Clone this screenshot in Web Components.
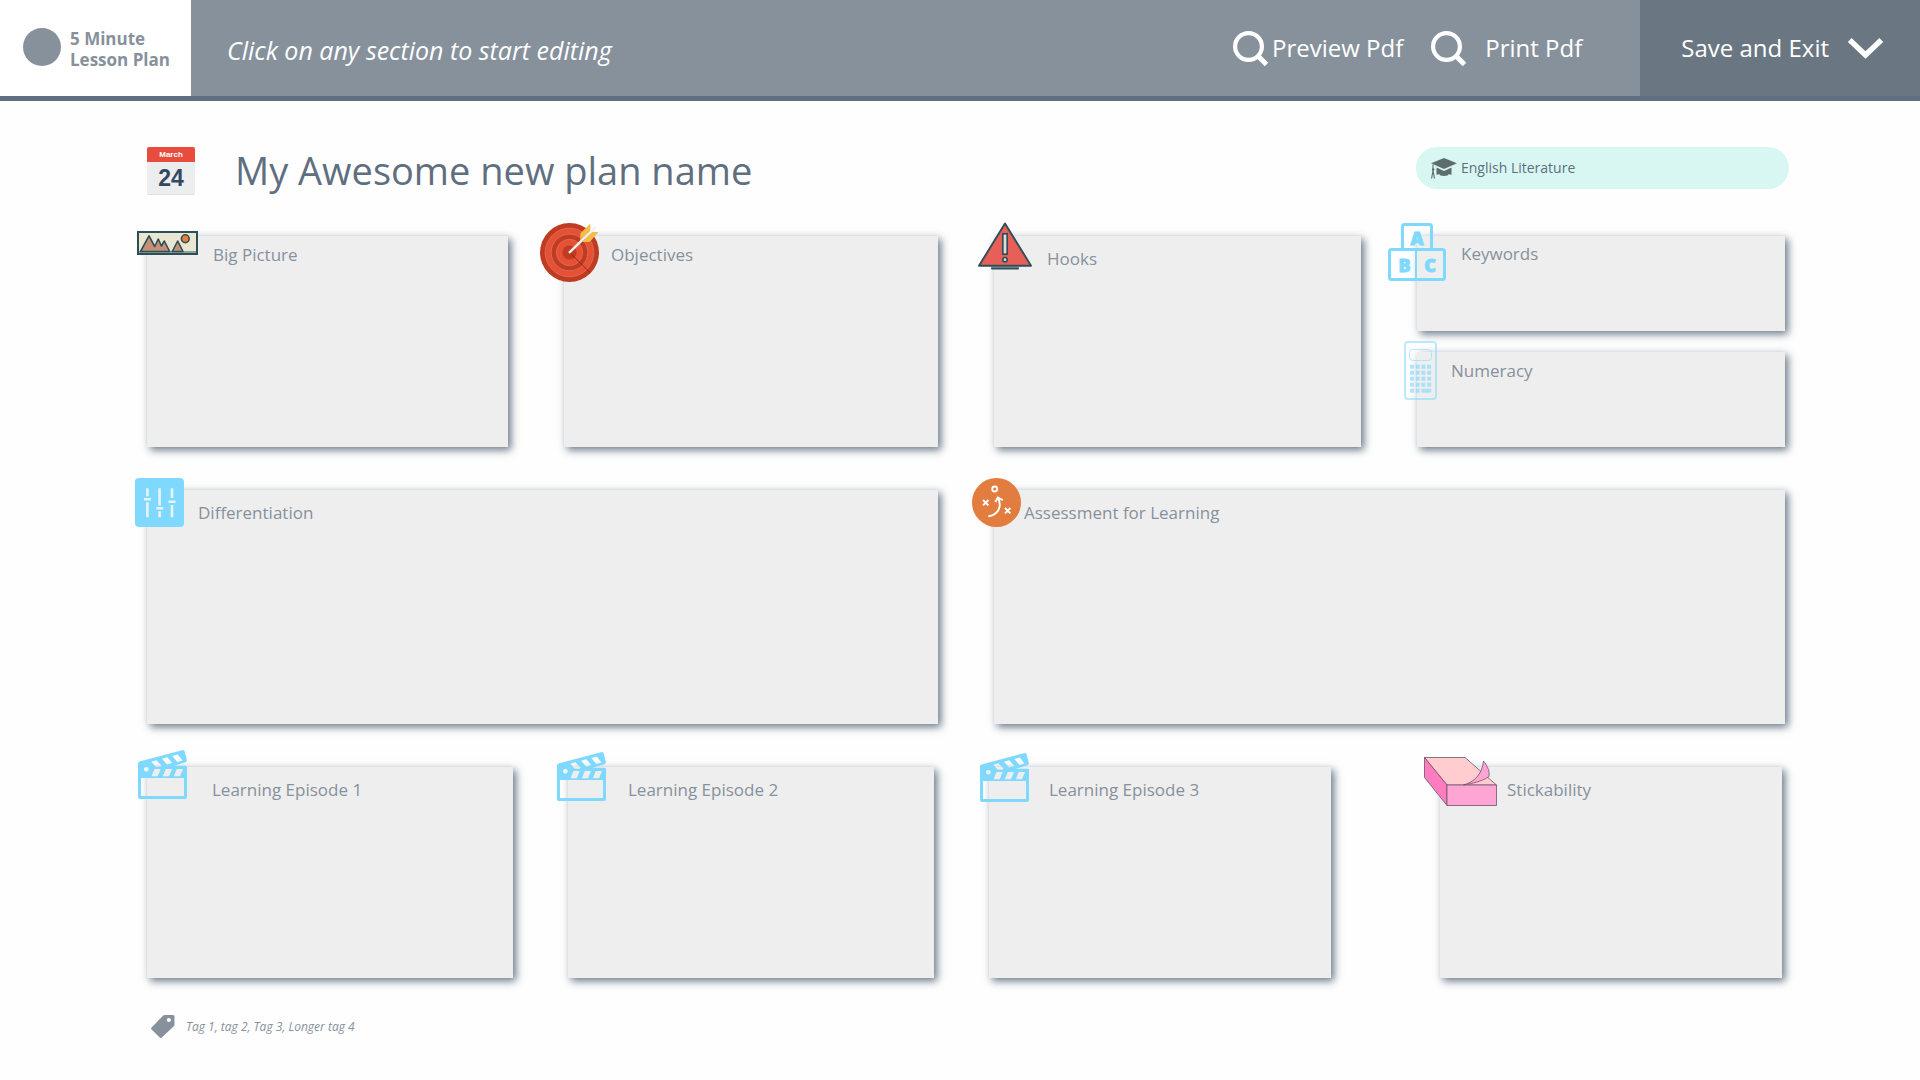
<!DOCTYPE html>
<html lang="en">
<head>
<meta charset="utf-8">
<title>5 Minute Lesson Plan</title>
<style>
  body { margin: 0; background: #fefefe; font-family: "Open Sans", "Noto Sans", sans-serif; color: #5f6f7f; }
</style>
</head>
<body>
<lesson-app></lesson-app>
<script>
const ICONS = {
  search: [35, 35, `<g fill="none" stroke="#fff"><circle cx="15.5" cy="15.5" r="13.4" stroke-width="4.2"/><path d="M25 25l8.5 8.5" stroke-width="5"/></g>`],
  chevron: [35, 21, `<path d="M1.7 2l15.8 15L33.300 2" fill="none" stroke="#fff" stroke-width="5.400"/>`],
  cap: [26, 21, `<g fill="#5d6c6c"><path d="M0 5.300L13 0l13 5.300L13 11z"/><path d="M5.500 9.500L13 13l7.500-3.500V17c-1.500-1-3-1-4 .5L13 18l-3.500-.5c-1-1.500-2.500-1.500-4-.5z"/><path d="M2 6.500v6L.6 20.500M2 12.500L3.500 20.500" fill="none" stroke="#5d6c6c" stroke-width="1.100"/><circle cx="2.200" cy="11.500" r="1.200"/></g>`],
  picture: [61, 24, `<rect x="1" y="1" width="59" height="22" fill="#e9e7d2" stroke="#2f4f58" stroke-width="2"/><path d="M2 21h57" stroke="#8fa098" stroke-width="2"/><g fill="#c69076" stroke="#2f4f58" stroke-width="1.600" stroke-linejoin="round"><path d="M3.500 20.500L12 4.800l5.700 10.700L21.300 8l3.100 7 2.900-5 5.400 10.500z"/><path d="M35.200 20.500L40.700 10l5.300 10.500z"/><circle cx="48.300" cy="7.700" r="3.900" fill="#f07c38"/></g>`],
  target: [59, 59, `<circle cx="29.500" cy="29.500" r="29.500" fill="#bf3c23"/><circle cx="29.500" cy="29.500" r="24.300" fill="#e65035"/><circle cx="29.500" cy="29.500" r="18.300" fill="#bf3c23"/><circle cx="29.500" cy="29.500" r="13.200" fill="#e65035"/><circle cx="29.500" cy="29.500" r="7" fill="#bf3c23"/><g fill="none" stroke="#e0806c" stroke-width=".6"><circle cx="29.500" cy="29.500" r="24.300"/><circle cx="29.500" cy="29.500" r="18.300"/><circle cx="29.500" cy="29.500" r="13.200"/></g><path d="M29.500 29.500l20.500 20" stroke="#8e2a18" stroke-width="1"/><path d="M40.300 10.500l10-10v7.500l-10 9.500z" fill="#f6bd45"/><path d="M58.500 9L49.700 19h-7.200L51.500 9z" fill="#f6bd45"/><path d="M29 29.800L55.300 4.300" stroke="#f0f0f0" stroke-width="2.400"/>`],
  warning: [54, 48, `<path d="M13 45h28" stroke="#8fa0a5" stroke-width="1.500"/><path d="M14 46.500h26" stroke="#2f4f58" stroke-width="2" stroke-linecap="round"/><path d="M27 1.500L53 43.700H1z" fill="#e85f5a" stroke="#2f4f58" stroke-width="1.900" stroke-linejoin="round"/><g fill="#e3d9d9" stroke="#2f4f58" stroke-width="1.700"><rect x="24.800" y="11.800" width="4.400" height="20.400"/><circle cx="27" cy="37.700" r="2.200"/></g>`],
  blocks: [58, 58, `<g fill="none" stroke="#7fd9ff" stroke-width="3"><path d="M14.500 26.500V3.500q0-2 2-2h25q2 0 2 2v23"/><rect x="1.500" y="26.500" width="55" height="30" rx="2"/><path d="M28 27v29" stroke-width="2"/></g><g fill="#7fd9ff" stroke="#7fd9ff" stroke-width=".9" font-family="'Open Sans', sans-serif" font-weight="800" font-size="18" text-anchor="middle"><text x="29" y="21.500">A</text><text x="16.500" y="48.500">B</text><text x="42" y="48.500">C</text></g>`],
  calculator: [33, 59, `<g stroke="#7fd9ff" fill="none" opacity=".52"><rect x="1" y="1" width="31" height="57" rx="3" stroke-width="2"/><rect x="5.500" y="8.500" width="22" height="11" rx="3"/></g><path opacity=".6" stroke="#7fd9ff" stroke-width="4" stroke-dasharray="4 1.700" d="M6 25.700h22M6 31.700h22M6 37.700h22M6 43.700h22M6 49.700h11"/><path opacity=".6" stroke="#7fd9ff" stroke-width="4" d="M17.300 49.700h10"/>`],
  sliders: [49, 49, `<rect width="49" height="49" rx="4" fill="#7fd9ff"/><g stroke="#eaf2f6" stroke-width="2.600"><path d="M12.400 10.300v8M12.400 24.300v15M24.600 10.300v17.200M24.600 33.200v6.100M37 10.300v9.800M37 27v12.300"/><path d="M9 21.300h7M21.200 30.300h7M33.500 23.700h7"/></g>`],
  strategy: [49, 49, `<circle cx="24.500" cy="24.500" r="24.500" fill="#e27d3f"/><g fill="none" stroke="#fff" stroke-width="1.900"><circle cx="22.700" cy="11" r="2.500"/><path d="M11 22l5.400 5.400m0-5.400L11 27.400M33 30l5.400 5.400m0-5.400L33 35.400"/><path d="M16.300 38.200C25 37 30.500 30 26.300 20.500"/><path d="M23.300 24l2.500-4.500 5 2.700"/></g>`],
  clapper: [49, 49, `<path fill="#7fd9ff" fill-rule="evenodd" d="M0 13.500q0-1.500 1.500-2L44 .2q2-.6 2.700 1.200l2 8q.7 2.200-1.200 2.800L36 15.700h11.500q1.500 0 1.500 1.500V47q0 2-2 2H2q-2 0-2-2zM3 28v18h43V28zM6 19.300a2.400 2.400 0 1 0 4.800 0a2.400 2.400 0 1 0-4.800 0M13.300 11.700l5-1.400 5.200 5.200-1 1.300h-4.700zM24 8.700l5.300-1.400 5 5.800-5.200 1.400zM34.400 6l5.300-1.400 4.800 5.900-5.200 1.400zM16.500 19h6.200l-3 7.200h-6.200zM27.800 19h6.200l-3 7.200h-6.200zM38.800 19H45l-3 7.200h-6.200z"/>`],
  notes: [73, 49, `<g stroke="#6f5465" stroke-width=".8" stroke-linejoin="round"><path d="M.5.5H41L72.500 28H23z" fill="#ffcdd0"/><path d="M.5.5L23 28v20.500L.5 20.500z" fill="#ff7cc0"/><path d="M23 28h49.500v20.500H23z" fill="#ffa5d5"/><path d="M39.500 28C50 25 58 18 59.500 4c3 4 6.500 9 5.500 15.500C57 25 49 26 39.500 28z" fill="#ffa5d5"/></g>`],
  tag: [24, 24, `<path fill="#87919c" fill-rule="evenodd" d="M12 .7Q12.700 0 13.700 0H22q1.500 0 1.500 1.500V9.500q0 1-.7 1.700L10.800 22.600q-1 1-2 0L.6 14.500q-1-1 0-2zM15.800 5a2.100 2.100 0 1 0 4.200 0a2.100 2.100 0 1 0-4.200 0"/>`]
};

class PlanIcon extends HTMLElement {
  connectedCallback() {
    const [w, h, art] = ICONS[this.getAttribute('name')];
    this.attachShadow({ mode: 'open' }).innerHTML = `
      <style>:host { display: block; flex: none; } svg { display: block; overflow: visible; }</style>
      <svg width="${w}" height="${h}" viewBox="0 0 ${w} ${h}" aria-hidden="true">${art}</svg>`;
  }
}

class BarButton extends HTMLElement {
  connectedCallback() {
    this.attachShadow({ mode: 'open' }).innerHTML = `
      <style>
        :host { display: flex; }
        button { display: flex; align-items: center; gap: var(--gap, 4px); margin: 0; padding: 0; border: 0;
          background: none; color: #fff; font: inherit; font-size: 24px; line-height: 32px; white-space: nowrap; cursor: pointer; }
      </style>
      <button type="button"><slot></slot></button>`;
  }
}

class PlanHeader extends HTMLElement {
  connectedCallback() {
    this.attachShadow({ mode: 'open' }).innerHTML = `
      <style>
        :host { display: block; }
        header { display: flex; min-height: 96px; background: #87919c; border-bottom: 5px solid #5f6f7f; color: #fff; }
        .brand { display: flex; align-items: flex-start; gap: 9px; box-sizing: border-box; width: 191px; padding: 28px 0 0 23px;
          background: #fff; color: #87919c; font-size: 17px; line-height: 21px; font-weight: 700; white-space: nowrap; }
        .dot { width: 38px; height: 38px; border-radius: 50%; background: #87919c; }
        .hint { flex: 1; align-self: center; margin: 0; padding: 3px 0 0 36px; font-size: 25px; line-height: 32px; font-style: italic; }
        nav { display: flex; align-items: center; gap: 28px; padding-right: 58px; }
        .save { display: flex; padding: 0 37px 0 41px; background: #6a7782; }
        .wide { --gap: 19px; }
      </style>
      <header>
        <div class="brand"><span class="dot"></span><span>5 Minute<br>Lesson Plan</span></div>
        <p class="hint">Click on any section to start editing</p>
        <nav>
          <bar-button><plan-icon name="search"></plan-icon>Preview Pdf</bar-button>
          <bar-button class="wide"><plan-icon name="search"></plan-icon>Print Pdf</bar-button>
        </nav>
        <div class="save"><bar-button class="wide">Save and Exit<plan-icon name="chevron"></plan-icon></bar-button></div>
      </header>`;
  }
}

class CalendarDate extends HTMLElement {
  connectedCallback() {
    this.attachShadow({ mode: 'open' }).innerHTML = `
      <style>
        :host { display: block; flex: none; }
        time { display: block; box-sizing: border-box; width: 48px; height: 48px; border-radius: 2px; overflow: hidden; background: #ebedee;
          border-bottom: 1px solid #dcdfe0; text-align: center; font-family: "Liberation Sans", sans-serif; font-weight: 700; }
        .month { display: block; background: #e84c3d; color: #fff; font-size: 8px; line-height: 15px; }
        .day { display: block; color: #34495e; font-size: 23px; line-height: 32px; }
      </style>
      <time datetime="03-24"><span class="month">March</span><span class="day">24</span></time>`;
  }
}

class SubjectPill extends HTMLElement {
  connectedCallback() {
    this.attachShadow({ mode: 'open' }).innerHTML = `
      <style>
        :host { display: block; }
        button { display: flex; align-items: center; gap: 4px; width: 100%; height: 42px; margin: 0; padding: 0 15px; border: 0; border-radius: 21px;
          background: #d8f7f2; color: #5f6f7f; font: inherit; font-size: 14px; line-height: 20px; cursor: pointer; }
      </style>
      <button type="button"><plan-icon name="cap"></plan-icon><slot></slot></button>`;
  }
}

class PlanSection extends HTMLElement {
  connectedCallback() {
    this.attachShadow({ mode: 'open' }).innerHTML = `
      <style>
        :host { display: block; position: relative; box-sizing: border-box; min-width: 0; padding: var(--top, 11px) 16px 16px var(--indent);
          background: #eee; box-shadow: 3px 3px 8px rgba(88, 104, 122, .9); cursor: pointer; }
        plan-icon { position: absolute; left: var(--x); top: var(--y); }
        h2 { margin: 0; color: #87919c; font-size: 17px; line-height: 24px; font-weight: 400; white-space: nowrap; }
      </style>
      <plan-icon name="${this.getAttribute('icon')}"></plan-icon>
      <h2><slot></slot></h2>`;
  }
}

class LessonApp extends HTMLElement {
  connectedCallback() {
    this.attachShadow({ mode: 'open' }).innerHTML = `
      <style>
        :host { display: block; }
        main { padding: 46px 135px 32px 147px; }
        .top { display: flex; align-items: flex-start; margin-bottom: 41px; }
        h1 { flex: 1; margin: 0; padding-left: 40px; font-size: 38px; line-height: 46px; font-weight: 400; }
        subject-pill { width: 373px; margin-right: -4px; }
        .board { display: grid; gap: 43px; }
        .row { display: grid; column-gap: 56px; min-height: 211px; }
        .first { grid-template-columns: 361fr 374fr 367fr 368fr; }
        .middle { grid-template-columns: 1fr 1fr; min-height: 234px; }
        .last { grid-template-columns: 366fr 366fr 342fr 396fr; column-gap: 55px; padding-right: 3px; }
        .stack { display: grid; grid-auto-rows: 1fr; gap: 21px; }
        .apart { margin-left: 54px; }
        footer { display: flex; align-items: center; gap: 11px; padding: 37px 0 0 4px; color: #87919c; font-size: 12px; line-height: 24px; font-style: italic; }
      </style>
      <plan-header></plan-header>
      <main>
        <div class="top">
          <calendar-date></calendar-date>
          <h1>My Awesome new plan name</h1>
          <subject-pill>English Literature</subject-pill>
        </div>
        <div class="board">
          <div class="row first">
            <plan-section icon="picture" style="--x:-10px;--y:-5px;--indent:66px;--top:7px">Big Picture</plan-section>
            <plan-section icon="target" style="--x:-24px;--y:-13px;--indent:47px;--top:7px">Objectives</plan-section>
            <plan-section icon="warning" style="--x:-16px;--y:-14px;--indent:53px">Hooks</plan-section>
            <div class="stack">
              <plan-section icon="blocks" style="--x:-29px;--y:-13px;--indent:44px;--top:6px">Keywords</plan-section>
              <plan-section icon="calculator" style="--x:-13px;--y:-11px;--indent:34px;--top:7px">Numeracy</plan-section>
            </div>
          </div>
          <div class="row middle">
            <plan-section icon="sliders" style="--x:-12px;--y:-12px;--indent:51px">Differentiation</plan-section>
            <plan-section icon="strategy" style="--x:-22px;--y:-12px;--indent:30px">Assessment for Learning</plan-section>
          </div>
          <div class="row last">
            <plan-section icon="clapper" style="--x:-9px;--y:-17px;--indent:65px">Learning Episode 1</plan-section>
            <plan-section icon="clapper" style="--x:-11px;--y:-15px;--indent:60px">Learning Episode 2</plan-section>
            <plan-section icon="clapper" style="--x:-9px;--y:-14px;--indent:60px">Learning Episode 3</plan-section>
            <plan-section class="apart" icon="notes" style="--x:-16px;--y:-10px;--indent:67px">Stickability</plan-section>
          </div>
        </div>
        <footer><plan-icon name="tag"></plan-icon><span>Tag 1, tag 2, Tag 3, Longer tag 4</span></footer>
      </main>`;
  }
}

customElements.define('plan-icon', PlanIcon);
customElements.define('bar-button', BarButton);
customElements.define('plan-header', PlanHeader);
customElements.define('calendar-date', CalendarDate);
customElements.define('subject-pill', SubjectPill);
customElements.define('plan-section', PlanSection);
customElements.define('lesson-app', LessonApp);
</script>
</body>
</html>
